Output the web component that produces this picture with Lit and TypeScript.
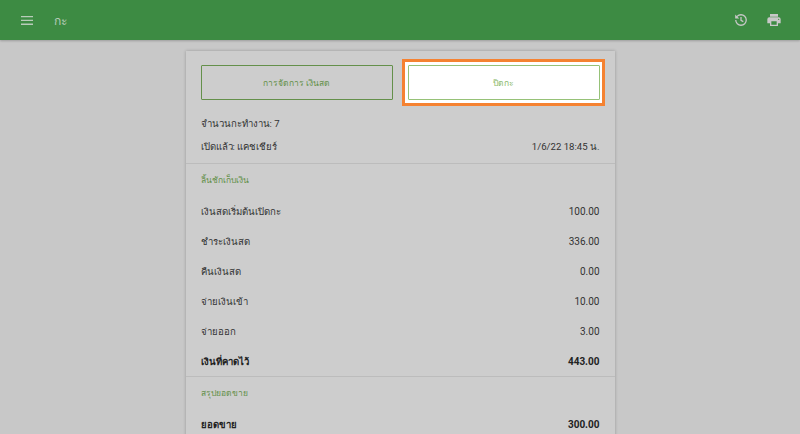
import { LitElement, html, css } from "lit";
import { customElement } from "lit/decorators.js";

const rows = [
  ["เงินสดเริ่มต้นเปิดกะ", "100.00"],
  ["ชำระเงินสด", "336.00"],
  ["คืนเงินสด", "0.00"],
  ["จ่ายเงินเข้า", "10.00"],
  ["จ่ายออก", "3.00"],
];

@customElement("app-root")
export class AppRoot extends LitElement {
  static styles = css`
    :host { display: block; height: 434px; overflow: hidden; background: #c8c8c8; font-family: Roboto, "Noto Sans", sans-serif; color: #333; font-size: 10px; }
    .bar { height: 40px; background: #3d8b43; box-shadow: 0 1px 2px rgba(0,0,0,.22); display: flex; align-items: center; padding: 0 18px 0 21px; color: #b9ccba; position: relative; }
    .bar .title { margin-left: 21px; font-size: 12px; }
    .bar .spacer { flex: 1; }
    .bar svg { display: block; fill: #c8c8c8; }
    .bar .menu { fill: #b9ccba; }
    .bar .hist { margin-right: 18px; }
    .hist .ln { fill: none; stroke: #c8c8c8; stroke-width: 2.2; }
    .card { width: 429px; margin: 11px auto 0; background: #cdcdcd; box-shadow: 0 0 3px rgba(0,0,0,.25); isolation: isolate; }
    .top { padding: 14px 15px 0; }
    .btns { display: grid; grid-template-columns: 192px 192px; gap: 15px; }
    .btn { height: 35px; display: flex; align-items: center; justify-content: center; border: 1px solid #64904a; border-radius: 1px; color: #64904a; font-size: 8.5px; box-sizing: border-box; position: relative; }
    .btn.on { background: #fff; border-color: #96c278; color: #8bb96c; }
    .btn.on::after { content: ""; position: absolute; inset: -7px -6px -7px -7px; border: 3px solid #f58231; background: #fff; z-index: -1; pointer-events: none; box-sizing: border-box; }
    .row { display: flex; justify-content: space-between; align-items: center; height: 30px; }
    .info { height: 23px; display: flex; justify-content: space-between; align-items: center; }
    .infos { padding-top: 12px; padding-bottom: 5px; }
    .th { font-size: 9.6px; }
    .date { font-size: 9.6px; }
    hr { border: 0; border-top: 1px solid #bcbcbc; margin: 0; }
    .sec { padding: 0 15px; }
    .sec-t { color: #64904a; font-size: 8.5px; height: 32px; display: flex; align-items: center; }
    .b { font-weight: 700; color: #222; }
  `;

  render() {
    return html`
      <div class="bar">
        <svg class="menu" width="12" height="9" viewBox="0 0 12 9"><path d="M0 0h12v1.3H0zM0 3.8h12v1.3H0zM0 7.6h12v1.3H0z"/></svg>
        <span class="title">กะ</span>
        <span class="spacer"></span>
        <svg class="hist" width="14" height="14" viewBox="0 0 24 24"><path class="ln" d="M3 12a9 9 0 1 0 9-9 9.75 9.75 0 0 0-6.74 2.74L3.5 7.5"/><path d="M2 2.5v7h7z"/><path class="ln" d="M12 7v5.5l4 2.2"/></svg>
        <svg width="16" height="16" viewBox="0 0 24 24"><path d="M19 8H5a3 3 0 0 0-3 3v6h4v4h12v-4h4v-6a3 3 0 0 0-3-3zm-3 11H8v-5h8zm3-7a1 1 0 1 1 0-2 1 1 0 0 1 0 2zm-1-9H6v4h12z"/></svg>
      </div>
      <div class="card">
        <div class="top">
          <div class="btns">
            <div class="btn">การจัดการ เงินสด</div>
            <div class="btn on">ปิดกะ</div>
          </div>
          <div class="infos">
            <div class="info"><span class="th">จำนวนกะทำงาน: 7</span></div>
            <div class="info"><span class="th">เปิดแล้ว: แคชเชียร์</span><span class="date">1/6/22 18:45 น.</span></div>
          </div>
        </div>
        <hr />
        <div class="sec">
          <div class="sec-t">ลิ้นชักเก็บเงิน</div>
          ${rows.map((r) => html`<div class="row"><span class="th">${r[0]}</span><span>${r[1]}</span></div>`)}
          <div class="row b"><span class="th">เงินที่คาดไว้</span><span>443.00</span></div>
        </div>
        <hr />
        <div class="sec">
          <div class="sec-t">สรุปยอดขาย</div>
          <div class="row b"><span class="th">ยอดขาย</span><span>300.00</span></div>
        </div>
      </div>
    `;
  }
}
